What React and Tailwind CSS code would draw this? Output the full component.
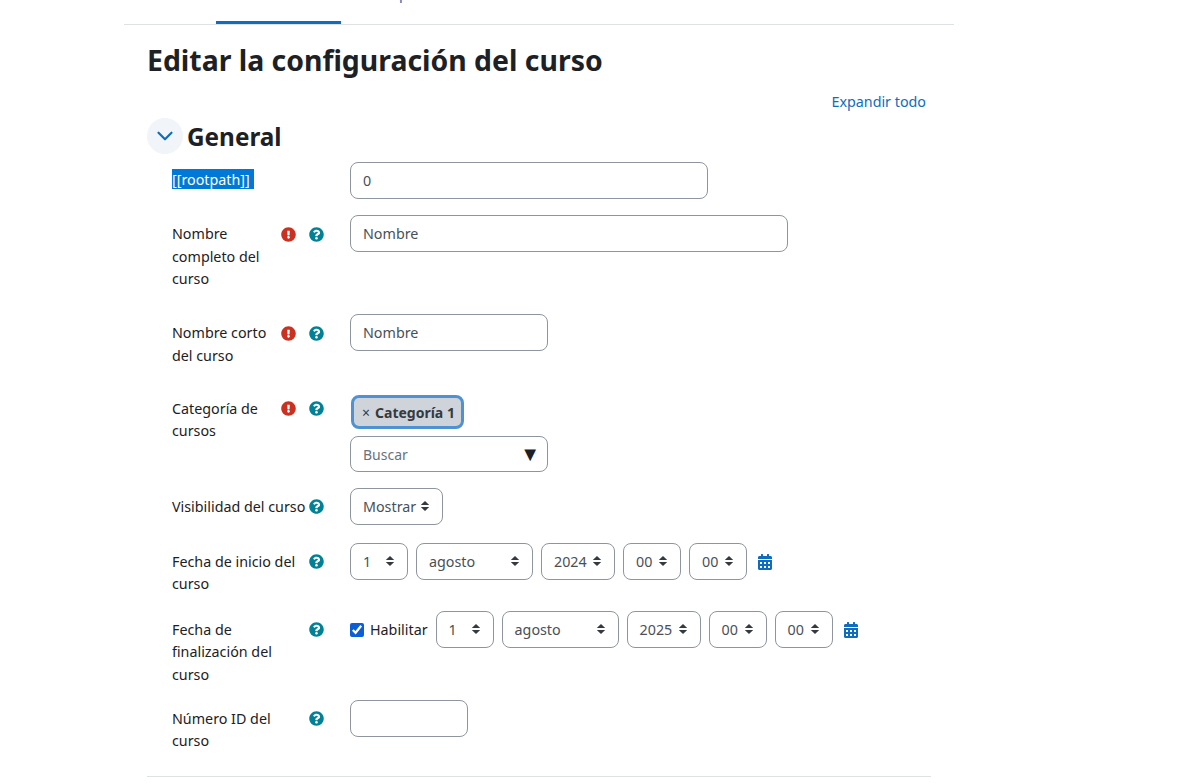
import { FaCalendarAlt, FaExclamationCircle, FaQuestionCircle } from 'react-icons/fa';
import { ChevronDown } from 'lucide-react';

const FIELD = 'rounded-lg border border-[#8f959e] bg-white px-3 text-[14.3px] text-[#495057] flex items-center';

function SortArrows() {
  return (
    <svg width="10" height="12" viewBox="0 0 10 12" className="shrink-0 -mt-px">
      <path d="M.8 4.9 5 1.1l4.2 3.8zM.8 7.1 5 10.9l4.2-3.8z" fill="#343a40" />
    </svg>
  );
}

function Select({ value, width }) {
  return (
    <div className={`${FIELD} h-[37px] justify-between shrink-0 ${width}`}>
      <span>{value}</span>
      <SortArrows />
    </div>
  );
}

function Input({ value, width }) {
  return <div className={`${FIELD} h-[37px] pt-[2px] ${width}`}>{value}</div>;
}

function Row({ lines, required, children, tight, className = 'mb-4' }) {
  return (
    <div className={`flex items-start pl-[25px] ${className}`}>
      <div className={`w-[153px] mr-[25px] shrink-0 flex justify-between ${tight ? 'pt-[7.5px] pb-2' : 'pt-[8.5px] pb-[7px]'}`}>
        <label className="leading-[22.5px] whitespace-nowrap">
          {lines.map((l) => <div key={l}>{l}</div>)}
        </label>
        <div className="flex gap-[13px] h-[22.5px] pr-px items-center shrink-0">
          {required && <FaExclamationCircle size={15} className="text-[#ca3120]" />}
          <FaQuestionCircle size={15} className="text-[#008196]" />
        </div>
      </div>
      {children}
    </div>
  );
}

function DateFields({ year }) {
  return (
    <>
      <Select value="1" width="w-[58px]" />
      <Select value="agosto" width="w-[117px]" />
      <Select value={year} width="w-[74px]" />
      <Select value="00" width="w-[58px]" />
      <Select value="00" width="w-[58px]" />
      <FaCalendarAlt size={16} className="text-[#0f6cbf] ml-[2px]" />
    </>
  );
}

export default function App() {
  return (
    <div className="h-[783px] overflow-hidden bg-white text-[14.3px] text-[#1d2125] font-['Noto_Sans','Open_Sans',sans-serif]">
      <div className="w-[830px] ml-[124px]">
        {/* Tabs */}
        <div className="flex h-[25px] overflow-hidden border-b border-[#dee2e6] pl-[92px]">
          <div className="w-[125px] h-[24px] border-b-[3px] border-[#0f6cbf] flex justify-center items-end pb-[19px]">
            <span className="leading-[22.5px]">Configuración</span>
          </div>
          <div className="h-[24px] px-4 flex items-end pb-[19px] text-[#0f6cbf]">
            <span className="leading-[22.5px]">Participantes</span>
          </div>
        </div>

        <div className="px-[23px]">
          <h2 className="mt-[18px] pb-px text-[28.4px] leading-[34px] font-bold">Editar la configuración del curso</h2>
          <div className="mt-[13px] pr-[5px] text-right leading-[22.5px] text-[#0f6cbf]">Expandir todo</div>

          <div className="mt-[4px] mb-2 flex items-center gap-1">
            <div className="w-9 h-9 rounded-full bg-[#f1f4f8] flex items-center justify-center text-[#0f6cbf]">
              <ChevronDown size={26} strokeWidth={2} />
            </div>
            <h3 className="h-9 pt-[2px] text-[24.3px] leading-[34px] font-bold">General</h3>
          </div>

          {/* Form */}
          <div className="flex items-start pl-[25px] mb-4">
            <div className="w-[178px] shrink-0 pt-[7.5px]">
              <span className="inline-block w-[82px] pt-px bg-[#0078d7] text-white leading-[19px]">[[rootpath]]</span>
            </div>
            <Input value="0" width="w-[358px]" />
          </div>

          <Row lines={['Nombre', 'completo del', 'curso']} required>
            <Input value="Nombre" width="w-[438px]" />
          </Row>

          <Row lines={['Nombre corto', 'del curso']} required>
            <Input value="Nombre" width="w-[198px]" />
          </Row>

          <Row lines={['Categoría de', 'cursos']} required tight>
            <div className="pt-[5px] pl-px">
              <div className="inline-flex items-center gap-[5px] h-[34px] pl-2 pr-[6px] rounded-lg border-[3px] border-[#4f92d3] bg-[#ced4da] text-[14px] font-bold text-[#343a40]">
                <span className="font-normal">×</span>
                <span>Categoría 1</span>
              </div>
              <div className={`${FIELD} h-[36px] justify-between w-[198px] mt-[7px] -ml-px`}>
                <span className="text-[14px] text-[#6a737b]">Buscar</span>
                <span className="text-[#1d2125] text-[20px] leading-none -mr-[5px]">▼</span>
              </div>
            </div>
          </Row>

          <Row lines={['Visibilidad del curso']} tight className="mb-[17px]">
            <Select value="Mostrar" width="w-[93px]" />
          </Row>

          <Row lines={['Fecha de inicio del', 'curso']} tight className="mb-[7.5px]">
            <div className="flex items-center gap-2">
              <DateFields year="2024" />
            </div>
          </Row>

          <Row lines={['Fecha de', 'finalización del', 'curso']} tight className="mb-[6px]">
            <div className="flex items-center gap-2">
              <label className="flex items-center gap-[6px] text-[#1d2125]">
                <input type="checkbox" defaultChecked readOnly className="w-[14px] h-[14px] accent-[#0b5ed7]" />
                Habilitar
              </label>
              <DateFields year="2025" />
            </div>
          </Row>

          <Row lines={['Número ID del', 'curso']} tight className="mb-[15px]">
            <Input value="" width="w-[118px]" />
          </Row>

          <hr className="border-[#dee2e6]" />
        </div>
      </div>
    </div>
  );
}
